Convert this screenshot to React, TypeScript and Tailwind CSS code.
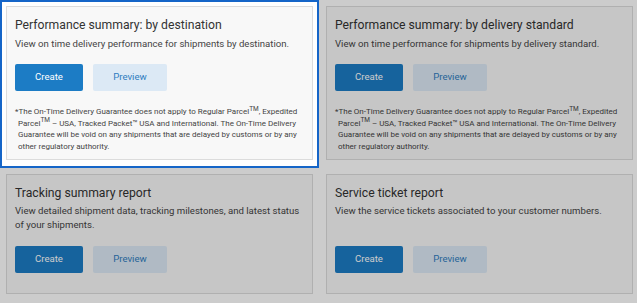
import React from "react";

type Report = {
  title: string;
  description: string;
  footnote?: boolean;
  active?: boolean;
};

const reports: Report[] = [
  {
    title: "Performance summary: by destination",
    description: "View on time delivery performance for shipments by destination.",
    footnote: true,
    active: true,
  },
  {
    title: "Performance summary: by delivery standard",
    description: "View on time performance for shipments by delivery standard.",
    footnote: true,
  },
  {
    title: "Tracking summary report",
    description:
      "View detailed shipment data, tracking milestones, and latest status of your shipments.",
  },
  {
    title: "Service ticket report",
    description: "View the service tickets associated to your customer numbers.",
  },
];

function Footnote() {
  return (
    <p className="mt-[15px] pl-[3px] -indent-[3px] text-[8px] leading-[11.7px] text-[#444]">
      *The On-Time Delivery Guarantee does not apply to Regular Parcel
      <sup className="text-[6.5px]">TM</sup>, Expedited Parcel
      <sup className="text-[6.5px]">TM</sup> – USA, Tracked Packet™ USA and International. The
      On-Time Delivery Guarantee will be void on any shipments that are delayed by customs or by
      any other regulatory authority.
    </p>
  );
}

function ReportCard({ report }: { report: Report }) {
  return (
    <div className={report.active ? "relative z-20" : "relative"}>
      {report.active && (
        <div className="absolute -top-[6px] -left-[6px] -right-[6px] -bottom-[8px] border-2 border-[#1565c8] bg-white" />
      )}
      <div className="relative flex h-full flex-col border border-[#dcdcdc] bg-[#f8f8f8] px-[8px] pt-[10px] pb-[6px]">
        <h2 className="text-[12.2px] leading-[16px] text-[#333]">{report.title}</h2>
        <p className={`mt-[3.5px] text-[9.6px] leading-[14px] text-[#444] ${report.footnote ? "" : "flex-1"}`}>
          {report.description}
        </p>
        <div className={`flex gap-[10px] ${report.footnote ? "mt-[13.5px]" : "mt-[13.5px] mb-[14px]"}`}>
          <button className="h-[27px] w-[68px] rounded-[2px] bg-[#1c7cc5] text-[9.6px] text-white">
            Create
          </button>
          <button className="h-[27px] w-[74px] rounded-[2px] bg-[#dce9f5] text-[9.6px] text-[#2f7cc0]">
            Preview
          </button>
        </div>
        {report.footnote && <Footnote />}
      </div>
    </div>
  );
}

export default function App() {
  return (
    <div className="relative h-[303px] w-[637px] overflow-hidden bg-white font-['Roboto',sans-serif]">
      <div className="grid grid-cols-[307px_307px] gap-x-[13px] gap-y-[14px] pl-[6px] pt-[6px]">
        {reports.map((r) => (
          <ReportCard key={r.title} report={r} />
        ))}
      </div>
      {/* dimming overlay; the active card sits above it */}
      <div className="absolute inset-0 z-10 bg-black/20" />
    </div>
  );
}
